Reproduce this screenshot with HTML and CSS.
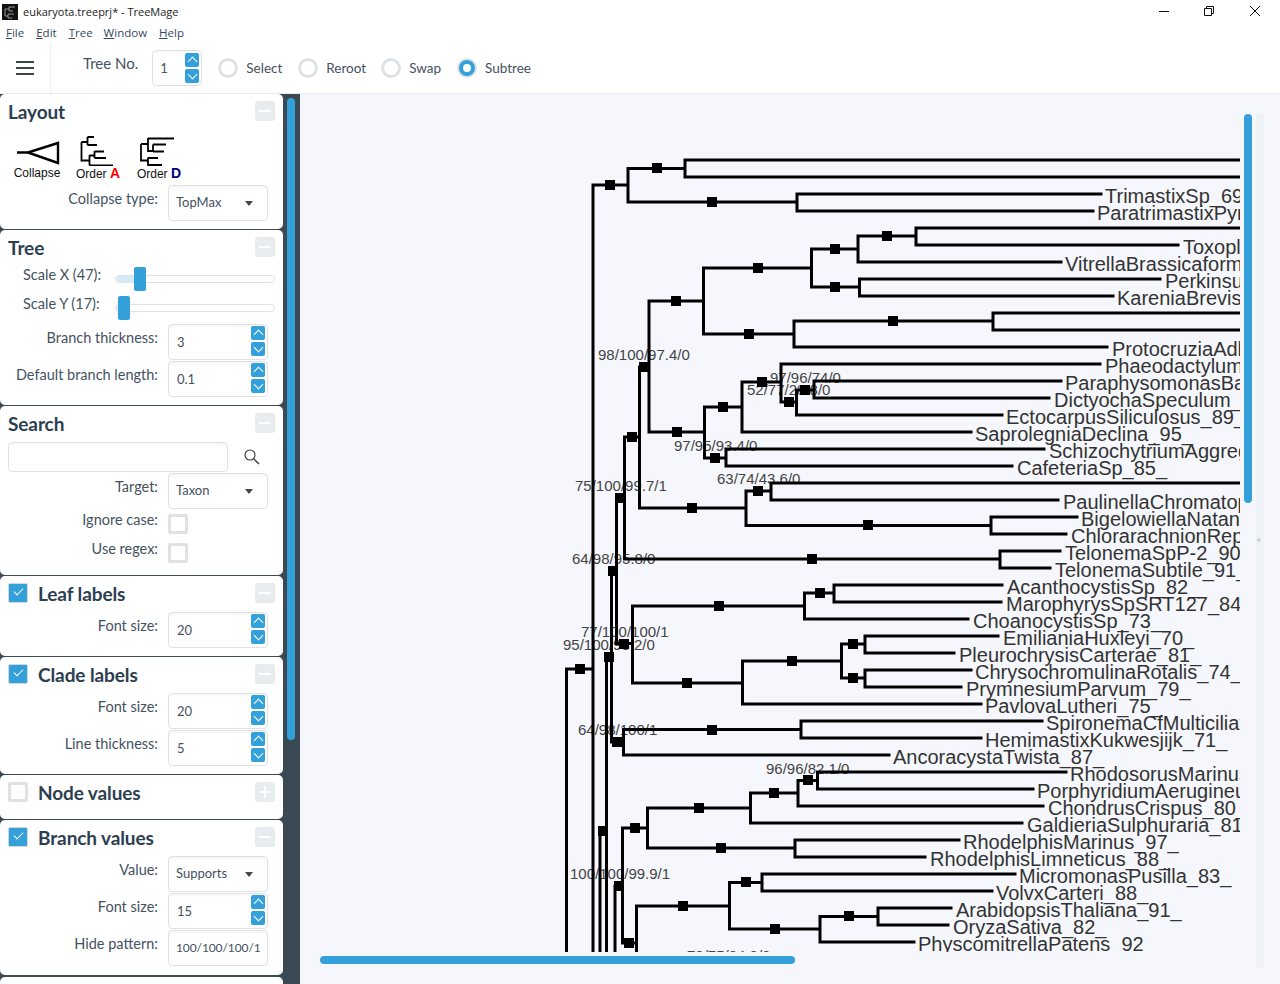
FILE: index.html
```html
<!DOCTYPE html>
<html lang="en">
<head>
  <meta charset="UTF-8" />
  <title>eukaryota.treeprj* - TreeMage</title>
  <link rel="stylesheet" href="styles.css">
</head>
<body>
  <div class="titlebar">
    <svg class="app-icon" width="16" height="16" viewBox="0 0 16 16">
      <rect width="16" height="16" fill="#111"/>
      <path d="M3 5V12M3 5H7M7 3V7M7 3H13M7 7H11M3 12H6M6 10V14M6 10H12M6 14H10" stroke="#999" fill="none"/>
    </svg>
    <span class="title-text">eukaryota.treeprj* - TreeMage</span>
    <div class="winbtns">
      <svg width="10" height="10" viewBox="0 0 10 10"><path d="M0 5.5H10" stroke="#111"/></svg>
      <svg width="10" height="10" viewBox="0 0 10 10"><path d="M.5 2.5H7.5V9.5H.5ZM2.5 2.5V.5H9.5V7.5H7.5" stroke="#111" fill="none"/></svg>
      <svg width="10" height="10" viewBox="0 0 10 10"><path d="M0 0L10 10M10 0L0 10" stroke="#111" fill="none"/></svg>
    </div>
  </div>
  <div class="menubar">
    <span><u>F</u>ile</span>
    <span><u>E</u>dit</span>
    <span><u>T</u>ree</span>
    <span class="menu-window"><u>W</u>indow</span>
    <span><u>H</u>elp</span>
  </div>
  <div class="toolbar">
    <div class="hamburger"><i></i><i></i><i></i></div>
    <label class="tree-no">Tree No.</label>
    <div class="spin tree-spin"><span>1</span><div class="arrows"><b class="up"></b><b class="down"></b></div></div>
    <div class="radios">
      <label class="radio"><i></i>Select</label>
      <label class="radio radio-reroot"><i></i>Reroot</label>
      <label class="radio"><i></i>Swap</label>
      <label class="radio on"><i></i>Subtree</label>
    </div>
  </div>

  <div class="content">
    <aside class="sidebar">
      <div class="thumb-side"></div>
      <section class="panel layout">
        <header><h2>Layout</h2><span class="toggle"></span></header>
        <div class="tools">
          <div class="tool tool-collapse">
            <svg width="46" height="24" viewBox="0 0 46 24"><path d="M3 11.5H14L44 2V22L14 11.5" stroke="#000" stroke-width="2.4" fill="none"/></svg>
            <span>Collapse</span>
          </div>
          <div class="tool tool-a">
            <svg width="46" height="32" viewBox="0 0 46 32"><path d="M7.5 9V27.5H15.5M7.5 9H13.5M13.5 4V12M13.5 4H20M13.5 12H23M15.5 22V32.5M15.5 22.5H20.5M20.5 18V25M20.5 18.5H30M20.5 25H32M15.5 32.5H39" transform="translate(0 -1)" stroke="#000" stroke-width="1.8" fill="none"/></svg>
            <span>Order <b class="red">A</b></span>
          </div>
          <div class="tool tool-d">
            <svg width="46" height="32" viewBox="0 0 46 32"><path d="M7 11V27.5H14M7 11H14M14 5V18H19M14 5.5H40M19 11.5V18.5M19 11.5H32M19 18.5H30M14 24.5V32H28M14 25H24" transform="translate(0 -1)" stroke="#000" stroke-width="1.8" fill="none"/></svg>
            <span>Order <b class="navy">D</b></span>
          </div>
        </div>
        <div class="row"><label>Collapse type:</label><div class="field select">TopMax</div></div>
      </section>

      <section class="panel tree">
        <header><h2>Tree</h2><span class="toggle"></span></header>
        <div class="slider-row"><label>Scale X (47):</label><div class="slider"><em class="fill"></em><b class="knob knob-x"></b></div></div>
        <div class="slider-row"><label>Scale Y (17):</label><div class="slider"><em class="fill fill-y"></em><b class="knob knob-y"></b></div></div>
        <div class="row"><label>Branch thickness:</label><div class="spin"><span>3</span><div class="arrows"><b class="up"></b><b class="down"></b></div></div></div>
        <div class="row"><label>Default branch length:</label><div class="spin"><span>0.1</span><div class="arrows"><b class="up"></b><b class="down"></b></div></div></div>
      </section>

      <section class="panel search">
        <header><h2>Search</h2><span class="toggle"></span></header>
        <div class="search-row">
          <div class="search-box"></div>
          <svg width="18" height="18" viewBox="0 0 18 18"><circle cx="7" cy="7" r="5" stroke="#333" stroke-width="1.1" fill="none"/><path d="M10.6 10.6L16 16" stroke="#333" stroke-width="1.3"/></svg>
        </div>
        <div class="row"><label>Target:</label><div class="field select">Taxon</div></div>
        <div class="row check-row"><label>Ignore case:</label><span class="check"></span></div>
        <div class="row check-row"><label>Use regex:</label><span class="check"></span></div>
      </section>

      <section class="panel leaf">
        <header><span class="check on"></span><h2>Leaf labels</h2><span class="toggle"></span></header>
        <div class="row"><label>Font size:</label><div class="spin"><span>20</span><div class="arrows"><b class="up"></b><b class="down"></b></div></div></div>
      </section>

      <section class="panel clade">
        <header><span class="check on"></span><h2>Clade labels</h2><span class="toggle"></span></header>
        <div class="row"><label>Font size:</label><div class="spin"><span>20</span><div class="arrows"><b class="up"></b><b class="down"></b></div></div></div>
        <div class="row"><label>Line thickness:</label><div class="spin"><span>5</span><div class="arrows"><b class="up"></b><b class="down"></b></div></div></div>
      </section>

      <section class="panel node">
        <header><span class="check"></span><h2>Node values</h2><span class="toggle plus"></span></header>
      </section>

      <section class="panel branch">
        <header><span class="check on"></span><h2>Branch values</h2><span class="toggle"></span></header>
        <div class="row"><label>Value:</label><div class="field select">Supports</div></div>
        <div class="row"><label>Font size:</label><div class="spin"><span>15</span><div class="arrows"><b class="up"></b><b class="down"></b></div></div></div>
        <div class="row"><label>Hide pattern:</label><div class="field pattern">100/100/100/1</div></div>
      </section>

      <section class="panel last"></section>
    </aside>

    <main class="canvas">
      <svg class="tree-svg" width="940" height="858" viewBox="300 94 940 858">
        <g class="node-labels">
          <text x="598" y="360">98/100/97.4/0</text>
          <text x="770" y="383">97/96/74/0</text>
          <text x="747" y="395">52/77/28.8/0</text>
          <text x="674" y="451">97/95/93.4/0</text>
          <text x="717" y="484">63/74/43.6/0</text>
          <text x="575" y="491">75/100/99.7/1</text>
          <text x="572" y="564">64/98/95.8/0</text>
          <text x="581" y="637">77/100/100/1</text>
          <text x="563" y="650">95/100/98.2/0</text>
          <text x="578" y="735">64/98/100/1</text>
          <text x="766" y="774">96/96/82.1/0</text>
          <text x="570" y="879">100/100/99.9/1</text>
          <text x="687" y="961">70/75/84.8/0</text>
        </g>
        <path class="branches" d="
          M566.5 669V960M566.5 669H593
          M593 185V960M593 185H628
          M628 168.5V202M628 168.5H685M685 160V177M685 160H1240M685 177H1240
          M628 202H797M797 194V211M797 194H1101M797 211H1093
          M649 301V432M649 301H703.5M703.5 268V334
          M703.5 268H811.5M811.5 249V287M811.5 249H858M858 236V262M858 236H916M916 228V245M916 228H1240M916 245H1178M858 262H1061
          M811.5 287H859.5M859.5 279V296M859.5 279H1160M859.5 296H1113
          M703.5 334H794M794 321V347M794 321H993M993 313V330M993 313H1240M993 330H1240M794 347H1107
          M639.5 367V508M639.5 367H649
          M649 432H704.5M704.5 407V458
          M704.5 407H742M742 382V432M742 432H971
          M742 382H781M781 364V402M781 364H1100M781 402H796.5M796.5 390V415M796.5 415H1002M796.5 390H814M814 381V398M814 381H1061M814 398H1049
          M704.5 458H726M726 449V466M726 449H1044M726 466H1012
          M639.5 508H746M746 491V525.5M746 491H771M771 483V500M771 483H1240M771 500H1058
          M746 525.5H991M991 517V534M991 517H1077M991 534H1066
          M624.5 437V559M624.5 437H639.5M624.5 559H1000M1000 551V568M1000 551H1060M1000 568H1050
          M616.5 498V643.5M616.5 498H624.5M616.5 643.5H632.5
          M632.5 606V683M632.5 606H804.5M804.5 593V619M804.5 593H834M834 585V602M834 585H1002M834 602H1001M804.5 619H968
          M632.5 683H742.5M742.5 661V704M742.5 704H981M742.5 661H841.5M841.5 644V678
          M841.5 644H865M865 636V653M865 636H998M865 653H954
          M841.5 678H865M865 670V687M865 670H971M865 687H961
          M611.5 571V742M611.5 571H616.5
          M606.5 657V960M606.5 657H611.5
          M611.5 742H623.5M623.5 729.5V755M623.5 729.5H801M801 721V738M801 721H1042M801 738H981M623.5 755H889
          M600 831V960M600 831H606.5
          M615 886V960M615 886H622.5
          M622.5 828V943M622.5 828H647.5M647.5 808V848
          M647.5 808H750.5M750.5 793V823M750.5 823H1022M750.5 793H798M798 780.5V806M798 806H1043M798 780.5H817.5M817.5 772V789M817.5 772H1066M817.5 789H1033
          M647.5 848H795M795 840V857M795 840H959M795 857H925
          M622.5 943H636.5M636.5 906V960
          M636.5 906H729.5M729.5 882.5V929M729.5 882.5H762M762 874V891M762 874H1015M762 891H992
          M729.5 929H820M820 916.5V942M820 942H914M820 916.5H878M878 908V925M878 908H951M878 925H948"/>
        <g class="markers">
          <rect x="605" y="180" width="10" height="10"/><rect x="652" y="163" width="10" height="10"/>
          <rect x="707" y="197" width="10" height="10"/><rect x="753" y="263" width="10" height="10"/>
          <rect x="830" y="244" width="10" height="10"/><rect x="882" y="231" width="10" height="10"/>
          <rect x="830" y="282" width="10" height="10"/><rect x="671" y="296" width="10" height="10"/>
          <rect x="744" y="329" width="10" height="10"/><rect x="888" y="316" width="10" height="10"/>
          <rect x="639" y="362" width="10" height="10"/><rect x="757" y="377" width="10" height="10"/>
          <rect x="800" y="385" width="10" height="10"/><rect x="784" y="397" width="10" height="10"/>
          <rect x="718" y="402" width="10" height="10"/><rect x="672" y="427" width="10" height="10"/>
          <rect x="627" y="432" width="10" height="10"/><rect x="710" y="453" width="10" height="10"/>
          <rect x="753" y="486" width="10" height="10"/><rect x="615" y="493" width="10" height="10"/>
          <rect x="687" y="503" width="10" height="10"/><rect x="863" y="520" width="10" height="10"/>
          <rect x="807" y="554" width="10" height="10"/><rect x="608" y="566" width="10" height="10"/>
          <rect x="815" y="588" width="10" height="10"/><rect x="714" y="601" width="10" height="10"/>
          <rect x="619" y="639" width="10" height="10"/><rect x="848" y="639" width="10" height="10"/>
          <rect x="604" y="652" width="10" height="10"/><rect x="787" y="656" width="10" height="10"/>
          <rect x="575" y="664" width="10" height="10"/><rect x="848" y="673" width="10" height="10"/>
          <rect x="682" y="678" width="10" height="10"/><rect x="707" y="725" width="10" height="10"/>
          <rect x="612" y="737" width="10" height="10"/><rect x="803" y="775" width="10" height="10"/>
          <rect x="769" y="788" width="10" height="10"/><rect x="694" y="803" width="10" height="10"/>
          <rect x="630" y="823" width="10" height="10"/><rect x="598" y="826" width="10" height="10"/>
          <rect x="716" y="843" width="10" height="10"/><rect x="741" y="877" width="10" height="10"/>
          <rect x="614" y="881" width="10" height="10"/><rect x="678" y="901" width="10" height="10"/>
          <rect x="844" y="911" width="10" height="10"/><rect x="770" y="924" width="10" height="10"/>
          <rect x="624" y="938" width="10" height="10"/>
        </g>
        <g class="leaf-labels">
          <text x="1105" y="203">TrimastixSp_69_</text>
          <text x="1097" y="220">ParatrimastixPyriformis_</text>
          <text x="1183" y="254">ToxoplasmaGondii_</text>
          <text x="1065" y="271">VitrellaBrassicaformis_</text>
          <text x="1165" y="288">PerkinsusMarinus_</text>
          <text x="1117" y="305">KareniaBrevis_</text>
          <text x="1112" y="356">ProtocruziaAdherens_</text>
          <text x="1105" y="373">PhaeodactylumTricornutum_</text>
          <text x="1065" y="390">ParaphysomonasBandaiensis_</text>
          <text x="1054" y="407">DictyochaSpeculum_</text>
          <text x="1006" y="424">EctocarpusSiliculosus_89_</text>
          <text x="975" y="441">SaprolegniaDeclina_95_</text>
          <text x="1049" y="458">SchizochytriumAggregatum_</text>
          <text x="1017" y="475">CafeteriaSp_85_</text>
          <text x="1063" y="509">PaulinellaChromatophora_</text>
          <text x="1081" y="526">BigelowiellaNatans_</text>
          <text x="1071" y="543">ChlorarachnionReptans_</text>
          <text x="1065" y="560">TelonemaSpP-2_90_</text>
          <text x="1055" y="577">TelonemaSubtile_91_</text>
          <text x="1007" y="594">AcanthocystisSp_82_</text>
          <text x="1006" y="611">MarophyrysSpSRT127_84_</text>
          <text x="973" y="628">ChoanocystisSp_73_</text>
          <text x="1003" y="645">EmilianiaHuxleyi_70_</text>
          <text x="959" y="662">PleurochrysisCarterae_81_</text>
          <text x="975" y="679">ChrysochromulinaRotalis_74_</text>
          <text x="966" y="696">PrymnesiumParvum_79_</text>
          <text x="985" y="713">PavlovaLutheri_75_</text>
          <text x="1046" y="730">SpironemaCfMulticiliatum_</text>
          <text x="985" y="747">HemimastixKukwesjijk_71_</text>
          <text x="893" y="764">AncoracystaTwista_87_</text>
          <text x="1070" y="781">RhodosorusMarinus_</text>
          <text x="1037" y="798">PorphyridiumAerugineum_</text>
          <text x="1048" y="815">ChondrusCrispus_80_</text>
          <text x="1027" y="832">GaldieriaSulphuraria_81_</text>
          <text x="963" y="849">RhodelphisMarinus_97_</text>
          <text x="930" y="866">RhodelphisLimneticus_88_</text>
          <text x="1019" y="883">MicromonasPusilla_83_</text>
          <text x="996" y="900">VolvxCarteri_88_</text>
          <text x="956" y="917">ArabidopsisThaliana_91_</text>
          <text x="953" y="934">OryzaSativa_82_</text>
          <text x="918" y="951">PhyscomitrellaPatens_92_</text>
        </g>
      </svg>
      <div class="track-v"><span>&#9666;</span></div>
      <div class="thumb-v"></div>
      <div class="thumb-h"></div>
    </main>
  </div>
</body>
</html>
```

FILE: styles.css
```css
* {
  box-sizing: border-box;
}
html, body {
  height: 100%;
}
body {
  margin: 0;
  background: #fff;
  color: #34495e;
  font-family: 'Lato', sans-serif;
  overflow: hidden;
  display: flex;
  flex-direction: column;
}

/* window chrome */
.titlebar {
  height: 23px;
  flex: none;
  display: flex;
  align-items: center;
  padding-left: 2px;
  font-family: 'Open Sans', sans-serif;
  font-size: 11px;
  color: #222;
}
.app-icon {
  margin-right: 5px;
}
.winbtns {
  margin-left: auto;
  display: flex;
  gap: 35px;
  padding: 0 20px 2px 0;
}
.winbtns svg:nth-child(2) {
  margin-right: 1px;
}
.menubar {
  height: 20px;
  flex: none;
  display: flex;
  padding-left: 6px;
  gap: 12px;
  font-family: 'Open Sans', sans-serif;
  font-size: 11.5px;
  line-height: 20px;
  color: #34495e;
}
.menu-window {
  margin-left: -1px;
}

.toolbar {
  height: 51px;
  flex: none;
  display: flex;
  align-items: center;
  border-bottom: 1px solid #e9ecef;
}
.hamburger {
  width: 51px;
  height: 50px;
  border-right: 1px solid #eceff1;
  display: flex;
  flex-direction: column;
  justify-content: center;
  gap: 4px;
  padding-left: 16px;
}
.hamburger i {
  display: block;
  width: 18px;
  height: 2px;
  background: #3a474e;
}
.tree-no {
  margin: -11px 0 0 32px;
  font-size: 15px;
  color: #44525f;
}
.tree-spin {
  margin: 0 0 0 14px;
}
.spin.tree-spin {
  width: 50px;
  padding-left: 7px;
}
.tree-spin .arrows {
  top: 2px;
}
.radios {
  display: flex;
  margin: -1px 0 0 16px;
}
.radio {
  display: flex;
  align-items: center;
  font-size: 13.5px;
  color: #44525f;
  margin-right: 16px;
}
.radio-reroot {
  margin-right: 15px;
}
.radio i {
  width: 20px;
  height: 20px;
  border-radius: 50%;
  border: 3px solid #dee2e6;
  margin-right: 8px;
}
.radio.on i {
  border: 4px solid #34a0da;
  background: #fff;
  box-shadow: 0 0 0 2px #dee2e6;
  width: 16px;
  height: 16px;
  margin: 0 10px 0 2px;
}

/* side panels */
.content {
  flex: 1;
  display: flex;
  min-height: 0;
}
.sidebar {
  position: relative;
  width: 300px;
  flex: none;
  background: #3b4a52;
  padding-right: 17px;
  display: flex;
  flex-direction: column;
  gap: 1px;
  overflow: hidden;
}
.thumb-side {
  position: absolute;
  left: 287px;
  top: 4px;
  width: 8px;
  height: 642px;
  background: #34a0da;
  border-radius: 4px;
}
.panel {
  background: #fff;
  border-radius: 5px;
  padding: 0 15px 0 8px;
  flex: none;
}
.panel header {
  height: 34px;
  margin-bottom: 2px;
  display: flex;
  align-items: center;
}
.panel h2 {
  margin: 0;
  font-size: 19px;
  font-weight: 700;
  color: #2c3e50;
  letter-spacing: -0.1px;
}
.toggle {
  position: relative;
  margin-left: auto;
  margin-right: -7px;
  width: 20px;
  height: 20px;
  background: #e9ecef;
  border-radius: 3px;
}
.toggle::before {
  content: "";
  position: absolute;
  left: 4px;
  right: 4px;
  top: 9px;
  height: 2px;
  background: #fff;
}
.toggle.plus::after {
  content: "";
  position: absolute;
  top: 4px;
  bottom: 4px;
  left: 9px;
  width: 2px;
  background: #fff;
}
.check {
  width: 20px;
  height: 20px;
  border: 3px solid #dee2e6;
  border-radius: 2px;
  background: #fff;
  position: relative;
  flex: none;
}
header .check {
  margin-right: 10px;
}
.check.on {
  background: #34a0da;
  border: 1px solid #cfd8de;
}
.check.on::after {
  content: "";
  position: absolute;
  left: 5px;
  top: 4px;
  width: 8px;
  height: 4px;
  border-left: 1.5px solid #fff;
  border-bottom: 1.5px solid #fff;
  transform: rotate(-45deg);
}

/* form rows */
.row {
  display: flex;
  justify-content: flex-end;
  height: 37px;
  gap: 10px;
  font-size: 14.5px;
}
.row label {
  padding-top: 5px;
  color: #44525f;
  white-space: nowrap;
}
.field, .spin {
  width: 100px;
  height: 36px;
  border: 1px solid #dee2e6;
  border-radius: 4px;
  background: #fff;
  font-size: 13px;
  color: #44525f;
  line-height: 33px;
  padding-left: 7px;
  box-shadow: inset 0 4px 4px -3px rgba(0,0,0,0.06);
  white-space: nowrap;
  overflow: hidden;
}
.pattern {
  font-size: 12px;
  letter-spacing: -0.1px;
}
.select {
  position: relative;
}
.select::after {
  content: "";
  position: absolute;
  right: 14px;
  top: 15px;
  border: 4px solid transparent;
  border-top: 5px solid #3a474e;
  border-bottom: 0;
}
.spin {
  position: relative;
  font-size: 13px;
  padding-left: 8px;
  line-height: 34px;
}
.arrows {
  position: absolute;
  right: 2px;
  top: 1px;
  display: flex;
  flex-direction: column;
  gap: 2px;
}
.arrows b {
  position: relative;
  width: 14px;
  height: 14px;
  background: #34a0da;
  border-radius: 2px;
  display: block;
}
.arrows b::after {
  content: "";
  position: absolute;
  left: 4px;
  width: 6px;
  height: 6px;
  border-left: 1.5px solid #fff;
  border-top: 1.5px solid #fff;
}
.arrows .up::after {
  top: 5px;
  transform: rotate(45deg);
}
.arrows .down::after {
  top: 2px;
  transform: rotate(225deg);
}

.tools {
  display: flex;
  height: 55px;
}
.tool {
  width: 46px;
  display: flex;
  flex-direction: column;
  align-items: center;
  font-family: 'Liberation Sans', sans-serif;
  font-size: 12px;
  color: #111;
  line-height: 14px;
  padding-top: 4px;
}
.tool svg {
  flex: none;
}
.tool span {
  white-space: nowrap;
}
.tool-collapse {
  margin-left: 6px;
  padding-top: 11px;
}
.tool-collapse svg {
  margin-bottom: 1px;
}
.tool-a {
  margin-left: 15px;
}
.tool-a svg {
  margin-left: -2px;
}
.tool-d {
  margin-left: 15px;
}
.tool-d svg {
  margin-left: -5px;
}
.tool .red { color: #f00; font-size: 14px; }
.tool .navy { color: #000080; font-size: 14px; }

.panel.layout { height: 135px; }
.panel.tree { height: 175px; }
.slider-row {
  display: flex;
  justify-content: space-between;
  height: 29px;
  font-size: 14.5px;
}
.slider-row label {
  margin-left: 15px;
  color: #44525f;
  white-space: nowrap;
}
.slider {
  position: relative;
  width: 160px;
  height: 8px;
  margin: 9px -7px 0 0;
  border: 1px solid #dee2e6;
  border-radius: 4px;
}
.fill {
  position: absolute;
  left: 0;
  top: 0;
  bottom: 0;
  width: 20px;
  background: #d6eaf8;
  border-radius: 4px 0 0 4px;
}
.fill-y {
  width: 5px;
}
.knob {
  position: absolute;
  top: -9px;
  width: 12px;
  height: 24px;
  background: #34a0da;
  border-radius: 2px;
}
.knob-x { left: 18px; }
.knob-y { left: 2px; }

.search-row {
  display: flex;
  align-items: center;
  height: 30px;
  margin-bottom: 1px;
}
.search-box {
  width: 220px;
  height: 30px;
  border: 1px solid #dee2e6;
  border-radius: 4px;
  box-shadow: inset 0 4px 4px -3px rgba(0,0,0,0.06);
  margin-right: 15px;
}
.panel.search { height: 169px; }
.row.check-row {
  height: 29px;
  padding-top: 4px;
}
.row.check-row label {
  padding-top: 0;
  margin-top: -3px;
}
.check-row .check {
  margin-right: 80px;
}
.panel.leaf { height: 80px; }
.panel.clade { height: 117px; }
.panel.node { height: 44px; }
.panel.branch { height: 155px; }
.panel.last { height: 20px; margin-top: 1px; }

/* tree area */
.canvas {
  position: relative;
  flex: 1;
  background: #f5f7fc;
}
.tree-svg {
  display: block;
}
.node-labels text {
  font-family: 'Liberation Sans', sans-serif;
  font-size: 15px;
  fill: #444;
}
.leaf-labels text {
  font-family: 'Liberation Sans', sans-serif;
  font-size: 20px;
  fill: #333;
}
.branches {
  fill: none;
  stroke: #000;
  stroke-width: 3;
  stroke-linecap: square;
}
.markers rect {
  fill: #000;
}
.track-v {
  position: absolute;
  left: 956px;
  top: 20px;
  width: 8px;
  height: 854px;
  background: #eef1f5;
  color: #c4cad0;
  font-size: 8px;
  line-height: 8px;
  padding-top: 421px;
}
.track-v span {
  font-family: 'DejaVu Sans', sans-serif;
}
.thumb-v {
  position: absolute;
  left: 944px;
  top: 20px;
  width: 8px;
  height: 389px;
  background: #34a0da;
  border-radius: 4px;
}
.thumb-h {
  position: absolute;
  left: 20px;
  top: 862px;
  width: 475px;
  height: 8px;
  background: #34a0da;
  border-radius: 4px;
}
```
